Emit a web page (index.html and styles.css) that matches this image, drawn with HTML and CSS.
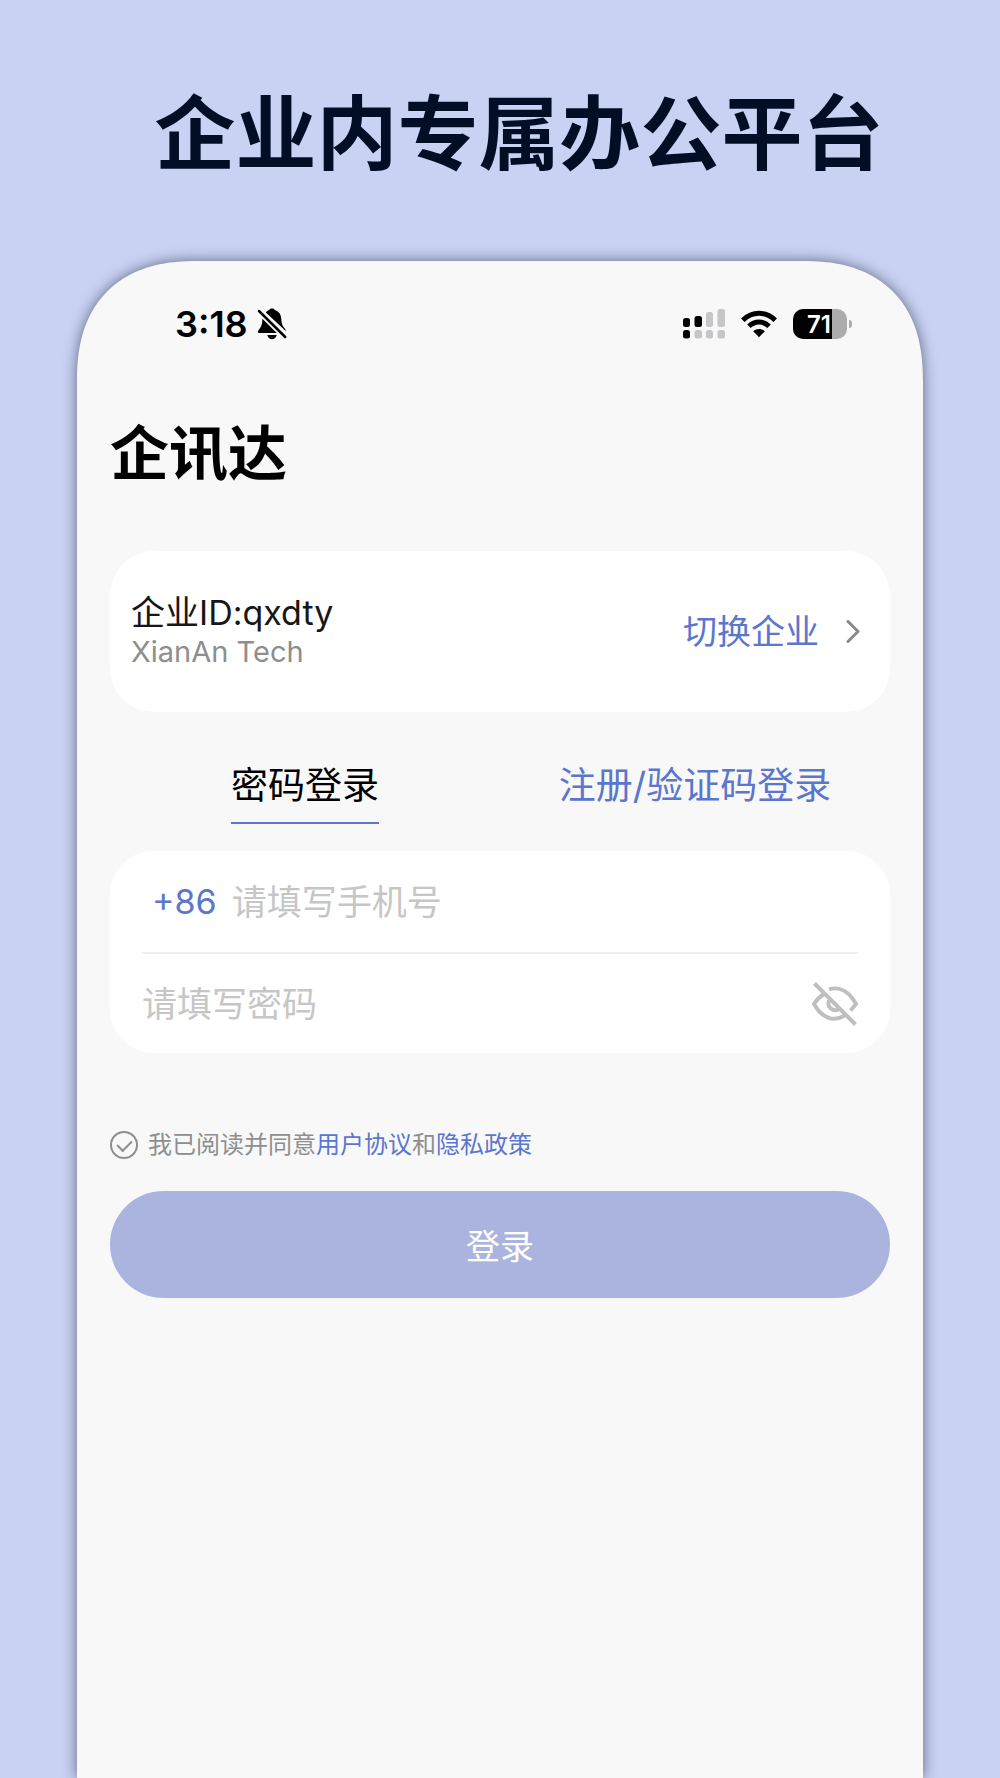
FILE: index.html
```html
<!DOCTYPE html>
<html lang="zh-CN">
<head>
  <meta charset="UTF-8" />
  <meta name="viewport" content="width=device-width, initial-scale=1.0"/>
  <title>企讯达</title>
  <link rel="stylesheet" href="styles.css">
</head>
<body>
  <h1 class="headline">企业内专属办公平台</h1>

  <main class="phone">
    <div class="status-bar">
      <div class="status-left">
        <span class="time">3:18</span>
        <svg class="bell" viewBox="0 0 30 32" aria-hidden="true">
          <path d="M8.8 4.6C10 3 11.200 2.400 12.200 2C12.800.9 13.600.5 15 .5s2.200.4 2.800 1.500C22.500 3.500 24 7 24.300 11c.3 5 1.200 7.200 3.700 9.800.6.6.8 1.400.7 2.200z"/>
          <path d="M5.400 10.800 19.800 25H2.200C.9 25 .4 23.500 1.300 22.400 4 19 5.200 17.500 5.400 10.800z"/>
          <path d="M10.300 27h9.400c-.6 2.600-2.200 4.300-4.700 4.300s-4.100-1.700-4.700-4.300z"/>
          <path class="slash" d="M2 3 28.200 29"/>
        </svg>
      </div>
      <div class="status-right">
        <svg class="signal" viewBox="0 0 42 30" aria-hidden="true">
          <rect x="0" y="9" width="7" height="9" rx="2.500"/>
          <rect x="11.500" y="7" width="7.500" height="11" rx="2.500"/>
          <rect class="off" x="23" y="3" width="7" height="15" rx="2.500"/>
          <rect class="off" x="34.500" y="0" width="7.500" height="18" rx="2.500"/>
          <rect x="0" y="21" width="7" height="8.500" rx="2.500"/>
          <rect class="off" x="11.500" y="21" width="7.500" height="8.500" rx="2.500"/>
          <rect class="off" x="23" y="21" width="7" height="8.500" rx="2.500"/>
          <rect class="off" x="34.500" y="21" width="7.500" height="8.500" rx="2.500"/>
        </svg>
        <svg class="wifi" viewBox="0 0 36 28" aria-hidden="true">
          <path class="arc" d="M1.800 10.200C11.200 1 24.800 1 34.200 10.200"/>
          <path class="arc" d="M7.900 16.300C13.800 10.600 22.200 10.600 28.100 16.300"/>
          <path d="M12.200 21.300C15.500 18.200 20.500 18.200 23.800 21.300L18 27.200z"/>
        </svg>
        <span class="battery">71</span>
      </div>
    </div>

    <h2 class="app-name">企讯达</h2>

    <section class="card company">
      <div class="company-info">
        <p class="company-id">企业ID:qxdty</p>
        <p class="company-name">XianAn Tech</p>
      </div>
      <a href="#" class="switch">切换企业
        <svg class="chevron" viewBox="0 0 14 24" aria-hidden="true"><path d="M2 1.500 12 11.500 2 21.500"/></svg>
      </a>
    </section>

    <div class="tabs">
      <button type="button" class="tab active">密码登录</button>
      <button type="button" class="tab">注册/验证码登录</button>
    </div>

    <form id="login-form">
      <div class="card fields">
        <div class="field">
          <button type="button" class="area-code">+86</button>
          <input type="tel" class="text-input" aria-label="手机号" placeholder="请填写手机号" />
        </div>
        <div class="field">
          <input type="password" class="text-input" aria-label="密码" placeholder="请填写密码" />
          <button type="button" class="toggle-password" aria-label="显示密码">
            <svg viewBox="0 0 46 46" aria-hidden="true">
              <path d="M17 8.300C28 5 37.500 11 44 23L38.500 29.500"/>
              <path d="M12.500 12.500C8 15.500 4.500 19 2 23C10.500 38 22 41 33 34.500"/>
              <path d="M17.200 19.200C14.500 25.500 20 31 26.500 28.500"/>
              <path d="M2.500 2.500 43.500 43.500"/>
            </svg>
          </button>
        </div>
      </div>

      <div class="agreement">
        <input type="checkbox" id="agree" class="agree-box" />
        <p><label for="agree">我已阅读并同意</label><a href="#">用户协议</a>和<a href="#">隐私政策</a></p>
      </div>

      <button type="submit" class="submit-btn">登录</button>
    </form>
  </main>
</body>
</html>
```
FILE: styles.css
```css
/* Reset & Base styles */
* {
  box-sizing: border-box;
  margin: 0;
  padding: 0;
}

body {
  font-family: Inter, 'Noto Sans CJK SC', sans-serif;
  background: #c9d2f3;
  min-height: 100vh;
  display: flex;
  flex-direction: column;
  color: #000;
}

button,
input {
  font: inherit;
  border: none;
  background: none;
  outline: none;
}

button {
  cursor: pointer;
}

a {
  color: #5a76ce;
  text-decoration: none;
}

.headline {
  padding: 74px 0 67px 38px;
  font-size: 81px;
  line-height: 120px;
  font-weight: 700;
  text-align: center;
  color: #020d26;
}

.phone {
  flex: 1;
  margin: 0 77px;
  padding: 33px 33px 0;
  background: #f8f8f8;
  border-radius: 100px 100px 0 0;
  box-shadow: 0 0 14px rgba(24, 28, 52, 0.6);
}

@supports (corner-shape: squircle) {
  .phone {
    border-radius: 120px 120px 0 0;
    corner-shape: superellipse(1.25);
  }
}

/* Status bar */
.status-bar {
  display: flex;
  justify-content: space-between;
  height: 60px;
  padding: 0 43px 0 65px;
}

.status-left,
.status-right {
  display: flex;
  align-items: center;
}

.status-left {
  gap: 9px;
}

.status-right {
  gap: 16px;
}

.time {
  font-size: 36px;
  font-weight: 600;
}

.bell {
  width: 30px;
  height: 32px;
}

.slash {
  stroke: #000;
  stroke-width: 2.5;
  stroke-linecap: round;
}

.signal {
  width: 42px;
  height: 30px;
}

.signal .off {
  fill: #c6c6c8;
}

.wifi {
  width: 36px;
  height: 28px;
}

.arc {
  fill: none;
  stroke: #000;
  stroke-width: 5;
}

.battery {
  position: relative;
  width: 54px;
  height: 30px;
  padding-right: 2px;
  border-radius: 10px;
  background: linear-gradient(to right, #000 72%, #acacac 72%);
  color: #fff;
  font-size: 24px;
  line-height: 31px;
  font-weight: 600;
  text-align: center;
}

.battery::after {
  content: '';
  position: absolute;
  left: 56px;
  top: 11px;
  width: 3px;
  height: 8px;
  border-radius: 0 4px 4px 0;
  background: #acacac;
}

.app-name {
  margin: 60px 0 57px;
  font-size: 59px;
  line-height: 80px;
  font-weight: 600;
}

/* Cards */
.card {
  background: #fff;
  border-radius: 44px;
}

.company {
  display: flex;
  align-items: center;
  justify-content: space-between;
  height: 161px;
  padding: 0 30px 0 21px;
}

.company-id {
  font-size: 34px;
  line-height: 40px;
  color: #171717;
}

.company-name {
  font-size: 29px;
  line-height: 38px;
  color: #8e8e8e;
}

.switch {
  display: flex;
  align-items: center;
  gap: 27px;
  font-size: 34px;
  line-height: 40px;
}

.chevron {
  width: 14px;
  height: 24px;
  fill: none;
  stroke: #8a8a8a;
  stroke-width: 3;
  stroke-linecap: round;
  stroke-linejoin: round;
}

/* Tabs */
.tabs {
  display: grid;
  grid-template-columns: 1fr 1fr;
  justify-items: center;
  margin: 46px 0 27px;
}

.tab {
  padding-bottom: 8px;
  border-bottom: 2px solid transparent;
  font-size: 37px;
  line-height: 56px;
  color: #5a76ce;
}

.tab.active {
  border-color: #5a76ce;
  color: #000;
}

/* Form */
.fields {
  padding: 0 32px;
}

.field {
  display: flex;
  align-items: center;
  height: 101px;
}

.field + .field {
  border-top: 2px solid #f0f0f0;
}

.area-code {
  padding: 0 15px 0 10px;
  font-size: 34px;
  color: #5a76ce;
}

.text-input {
  flex: 1;
  min-width: 0;
  font-size: 35px;
  line-height: 52px;
}

.text-input::placeholder {
  color: #c6c6c6;
}

.toggle-password svg {
  display: block;
  width: 46px;
  height: 46px;
  fill: none;
  stroke: #bfbfbf;
  stroke-width: 4;
}

.agreement {
  display: flex;
  align-items: center;
  gap: 10px;
  margin: 76px 0 30px;
  font-size: 24px;
  line-height: 32px;
  color: #8e8e8e;
}

.agree-box {
  appearance: none;
  display: flex;
  justify-content: center;
  width: 28px;
  height: 28px;
  border: 2px solid #8e8e8e;
  border-radius: 50%;
}

.agree-box::before {
  content: '';
  width: 7px;
  height: 12px;
  margin-top: 4px;
  border: solid #8e8e8e;
  border-width: 0 2px 2px 0;
  transform: rotate(45deg);
}

.submit-btn {
  display: block;
  width: 100%;
  height: 107px;
  border-radius: 54px;
  background: #aab4df;
  color: #fff;
  font-size: 34px;
}
```
